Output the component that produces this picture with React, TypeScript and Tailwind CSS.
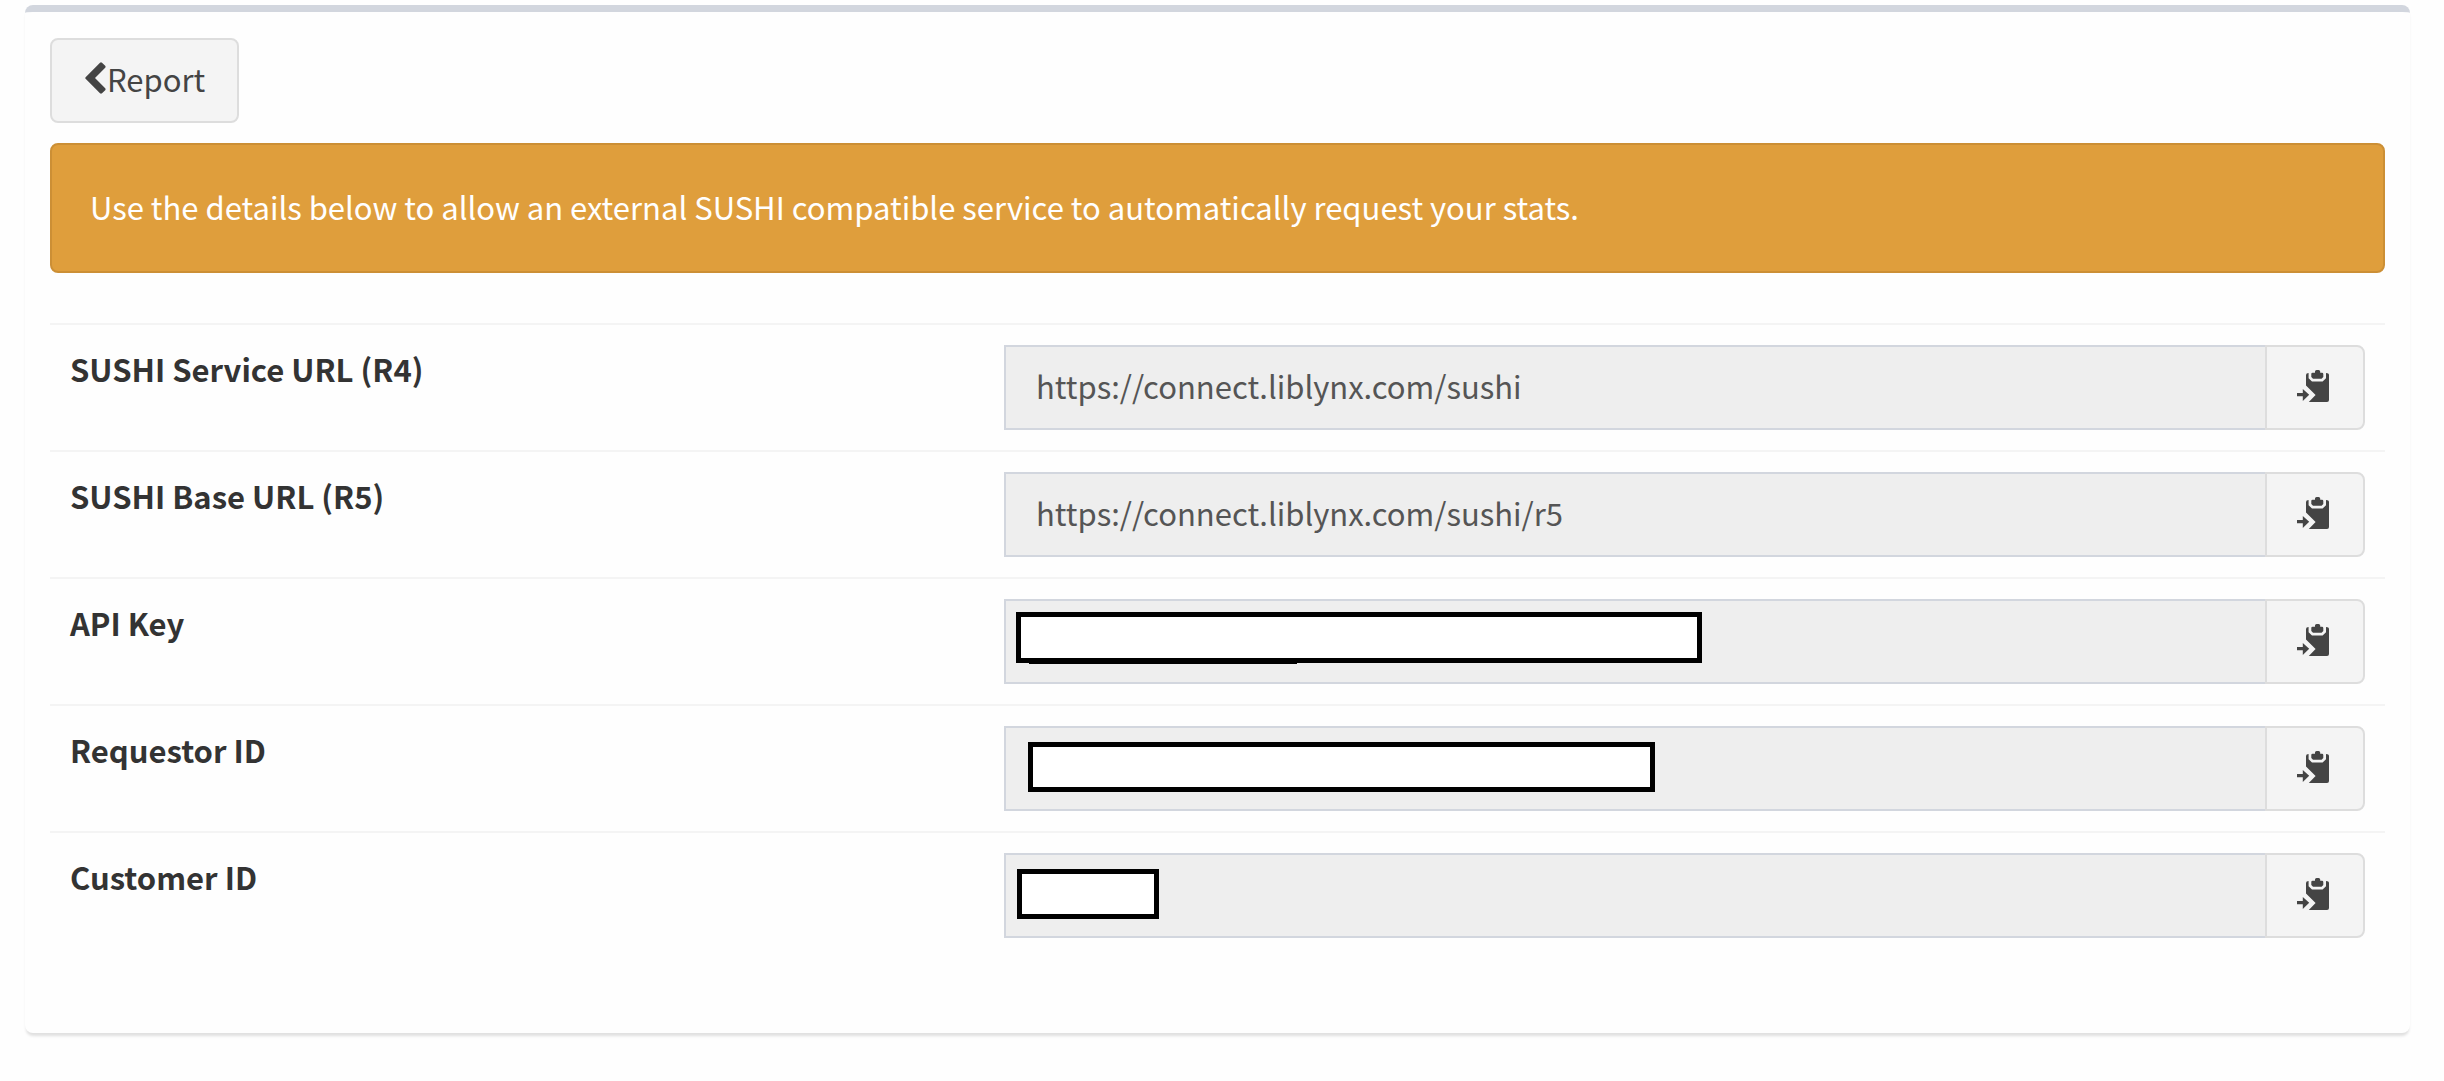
interface Mask {
  box: string;
  underline?: string;
}

interface Field {
  id: string;
  label: string;
  value: string;
  mask?: Mask;
}

const fields: Field[] = [
  {
    id: "service-url",
    label: "SUSHI Service URL (R4)",
    value: "https://connect.liblynx.com/sushi",
  },
  {
    id: "base-url",
    label: "SUSHI Base URL (R5)",
    value: "https://connect.liblynx.com/sushi/r5",
  },
  {
    id: "api-key",
    label: "API Key",
    value: "",
    mask: {
      box: "left-3 top-[13px] h-[51px] w-[686px]",
      underline: "left-[25px] top-[64px] h-px w-[268px]",
    },
  },
  {
    id: "requestor-id",
    label: "Requestor ID",
    value: "",
    mask: { box: "left-6 top-4 h-[50px] w-[627px]" },
  },
  {
    id: "customer-id",
    label: "Customer ID",
    value: "",
    mask: { box: "left-[13px] top-4 h-[50px] w-[142px]" },
  },
];

function ChevronLeft() {
  return (
    <svg viewBox="0 0 21 32" className="w-[21px] h-8 -mt-0.5" fill="currentColor" aria-hidden="true">
      <path d="M15 0.7 Q16 -0.2 17 0.7 L20.2 3.8 Q21 4.8 20.2 5.8 L10 16 L20.2 26.2 Q21 27.2 20.2 28.2 L17 31.3 Q16 32.2 15 31.3 L0.6 16.8 Q-0.1 16 0.6 15.2 Z" />
    </svg>
  );
}

function PasteIcon() {
  return (
    <svg viewBox="0 0 32 32" className="w-8 h-8" fill="currentColor" aria-hidden="true">
      {/* arrow */}
      <path d="M0 23 H5.8 V19 L12.2 24.8 L5.8 31 V26.2 H0 Z" />
      {/* clip */}
      <path d="M18 1.6 Q18 0 19.6 0 H21.6 Q23.2 0 23.2 1.6 V2.7 H25 Q26.3 2.7 26.3 4 V7 L24.6 8.8 H16 L14.3 7 V4 Q14.3 2.7 15.6 2.7 H18 Z" />
      {/* board */}
      <path d="M9 5 Q9 3 11.6 3 V8.3 L15 11.6 H25.6 L29 8.3 V3 Q32 3 32 5 V30 Q32 32 30 32 H11.8 L18.6 25 L9 15.6 Z" />
    </svg>
  );
}

function FieldRow({ field }: { field: Field }) {
  return (
    <tr className="border-t-2 border-[#f4f4f4]">
      <th scope="row" className="w-2/5 px-5 pt-[19px] text-left align-top font-bold text-[#333]">
        <label htmlFor={field.id} className="block">{field.label}</label>
      </th>
      <td className="p-5 align-top">
        <div className="flex">
          <div className="relative flex-1">
            <input
              id={field.id}
              type="text"
              readOnly
              defaultValue={field.value}
              className="block w-full border-2 border-r-0 border-[#d2d6de] bg-[#eee] px-[30px] pt-[14px] pb-[17px] text-[#555] outline-none"
            />
            {field.mask && (
              <div className={`absolute border-5 border-black bg-white ${field.mask.box}`} />
            )}
            {field.mask?.underline && (
              <div className={`absolute bg-black ${field.mask.underline}`} />
            )}
          </div>
          <button
            type="button"
            aria-label={`Copy ${field.label}`}
            className="flex w-[100px] items-center justify-center rounded-r-lg border-2 border-[#ddd] bg-[#f4f4f4] pr-1 pb-[3px] text-[#444]"
          >
            <PasteIcon />
          </button>
        </div>
      </td>
    </tr>
  );
}

export default function App() {
  return (
    <div className="min-h-screen bg-[#fefefe] pt-[5px] pl-[25px] pr-[34px] font-['Noto_Sans_CJK_SC','Noto_Sans',sans-serif] text-[31px] leading-[50px]">
      <main className="rounded-lg border-t-7 border-[#d2d6de] bg-[#fefefe] px-[25px] pt-[26px] pb-[75px] shadow-[0_4px_3px_-1px_rgba(0,0,0,0.12)]">
        <button
          type="button"
          className="flex items-center gap-px rounded-lg border-2 border-[#ddd] bg-[#f4f4f4] pl-[33px] pr-8 pt-[14px] pb-[17px] text-[#444]"
        >
          <ChevronLeft />
          <span>Report</span>
        </button>

        <div
          role="alert"
          className="mt-5 rounded-lg border-2 border-[#cc8f35] bg-[#df9e3c] px-[38px] pt-[37px] pb-[39px] text-white"
        >
          Use the details below to allow an external SUSHI compatible service to automatically request your stats.
        </div>

        <table className="mt-[50px] w-full table-fixed border-collapse">
          <tbody>
            {fields.map((field) => (
              <FieldRow key={field.id} field={field} />
            ))}
          </tbody>
        </table>
      </main>
    </div>
  );
}
